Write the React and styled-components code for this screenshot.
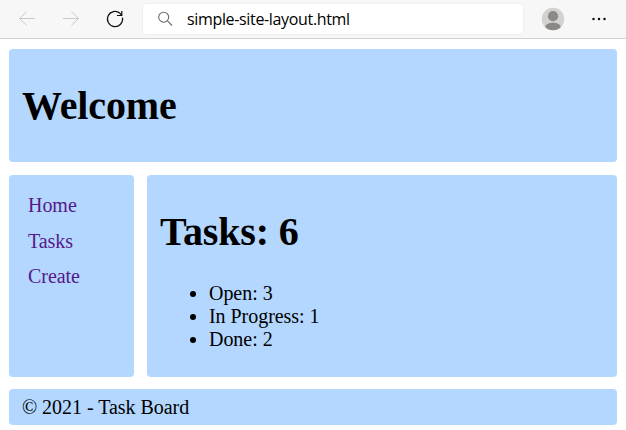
import React from "react";
import styled, { createGlobalStyle } from "styled-components";

const GlobalStyle = createGlobalStyle`
  * { box-sizing: border-box; }
  body {
    margin: 0;
    background: #fff;
    color: #000;
    font: 20px/23px "Liberation Serif", "Times New Roman", serif;
    letter-spacing: -0.04px;
  }
`;

const Toolbar = styled.header`
  display: flex;
  align-items: center;
  height: 39px;
  padding: 0 16px 1px;
  background: #f7f7f7;
  border-bottom: 1px solid #d0d0d0;
`;

const ToolButton = styled.button`
  display: flex;
  flex: none;
  width: 22px;
  height: 22px;
  margin: 0 ${(p) => p.$gap || 0}px 0 0;
  padding: 0;
  border: 0;
  background: none;
  color: ${(p) => (p.$disabled ? "#c8c8c8" : "#111")};
`;

const AddressBar = styled.div`
  display: flex;
  align-items: center;
  flex: none;
  width: 380px;
  height: 30px;
  margin-right: 18px;
  padding-left: 14px;
  background: #fff;
  border-radius: 4px;
  box-shadow: 0 0 3px rgba(0, 0, 0, 0.08);
`;

const Address = styled.span`
  margin-left: 14px;
  font: 16px/22px "Open Sans", "Noto Sans", sans-serif;
  letter-spacing: -0.34px;
  white-space: nowrap;
`;

const Page = styled.div`
  display: grid;
  grid-template-columns: 125px 470px;
  grid-template-rows: 113px 215px 48px;
  column-gap: 13px;
  padding: 10px 9px 5px;
`;

const Panel = styled.section`
  background: #b3d7ff;
  border-radius: 4px;
  padding: 0 13px;
`;

const Banner = styled(Panel)`
  grid-column: 1 / -1;
  padding-top: 34px;
`;

const Sidebar = styled(Panel).attrs({ as: "nav" })`
  display: flex;
  flex-direction: column;
  gap: 12.5px;
  margin-top: 13px;
  padding: 19px;
`;

const NavLink = styled.a`
  color: #551a8b;
  text-decoration: none;
`;

const Content = styled(Panel).attrs({ as: "main" })`
  margin-top: 13px;
  padding-top: 34px;
`;

const Footer = styled(Panel).attrs({ as: "footer" })`
  grid-column: 1 / -1;
  margin-top: 12px;
  padding-top: 7px;
`;

const Title = styled.h1`
  margin: 0;
  font-size: 40px;
  line-height: 46px;
  letter-spacing: -0.12px;
`;

const TaskList = styled.ul`
  margin: 27px 0 0;
  padding-left: 49px;
`;

const Back = () => (
  <svg width="22" height="22" viewBox="0 0 22 22" fill="none" stroke="currentColor">
    <path d="M19 10.5H3.5M10.5 3.8l-7 6.7 7 6.7" />
  </svg>
);

const Forward = () => (
  <svg width="22" height="22" viewBox="0 0 22 22" fill="none" stroke="currentColor">
    <path d="M3 10.5h15.5M11.5 3.8l7 6.7-7 6.7" />
  </svg>
);

const Reload = () => (
  <svg width="22" height="22" viewBox="0 0 22 22" fill="none" stroke="currentColor" strokeWidth="1.2">
    <path d="M18.5 9.7A7.6 7.6 0 1 1 16 5.3L17.8 7.5M17.8 3v4.5h-4.8" />
  </svg>
);

const Search = () => (
  <svg width="16" height="16" viewBox="0 0 16 16" fill="none" stroke="#6b6b6b" strokeWidth="1.1">
    <circle cx="6.7" cy="6.2" r="5" />
    <path d="M10.4 9.9l4.6 4.6" />
  </svg>
);

const Profile = () => (
  <svg width="24" height="24" viewBox="0 0 24 24">
    <clipPath id="avatar"><circle cx="12" cy="12" r="11.2" /></clipPath>
    <g clipPath="url(#avatar)">
      <rect width="24" height="24" fill="#d3d2cf" />
      <circle cx="12" cy="9.2" r="5.1" fill="#8b8886" />
      <ellipse cx="12" cy="20.7" rx="8" ry="5.3" fill="#8b8886" />
    </g>
  </svg>
);

const More = () => (
  <svg width="22" height="22" viewBox="0 0 22 22" fill="currentColor">
    <circle cx="5.5" cy="11" r="1.25" />
    <circle cx="11" cy="11" r="1.25" />
    <circle cx="16.5" cy="11" r="1.25" />
  </svg>
);

const ProfileButton = styled(ToolButton)`
  width: 24px;
  height: 24px;
`;

export default function App() {
  return (
    <>
      <GlobalStyle />
      <Toolbar>
        <ToolButton $disabled $gap={22} aria-label="Back"><Back /></ToolButton>
        <ToolButton $disabled $gap={22} aria-label="Forward"><Forward /></ToolButton>
        <ToolButton $gap={17} aria-label="Reload"><Reload /></ToolButton>
        <AddressBar>
          <Search />
          <Address>simple-site-layout.html</Address>
        </AddressBar>
        <ProfileButton $gap={23} aria-label="Profile"><Profile /></ProfileButton>
        <ToolButton aria-label="More"><More /></ToolButton>
      </Toolbar>
      <Page>
        <Banner>
          <Title>Welcome</Title>
        </Banner>
        <Sidebar>
          <NavLink href="#home">Home</NavLink>
          <NavLink href="#tasks">Tasks</NavLink>
          <NavLink href="#create">Create</NavLink>
        </Sidebar>
        <Content>
          <Title>Tasks: 6</Title>
          <TaskList>
            <li>Open: 3</li>
            <li>In Progress: 1</li>
            <li>Done: 2</li>
          </TaskList>
        </Content>
        <Footer>{"© 2021 - Task Board"}</Footer>
      </Page>
    </>
  );
}
